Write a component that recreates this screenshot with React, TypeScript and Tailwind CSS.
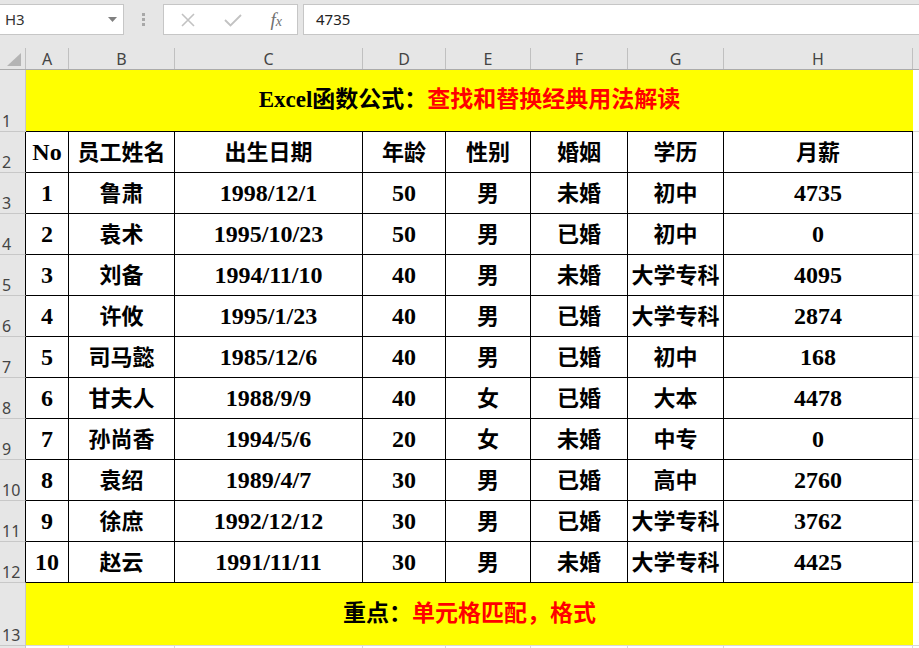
import React from "react";

const cols = [43, 106, 188, 83, 85, 97, 96, 189];
const letters = ["A", "B", "C", "D", "E", "F", "G", "H"];

const header = ["No", "员工姓名", "出生日期", "年龄", "性别", "婚姻", "学历", "月薪"];

const rows: string[][] = [
  ["1", "鲁肃", "1998/12/1", "50", "男", "未婚", "初中", "4735"],
  ["2", "袁术", "1995/10/23", "50", "男", "已婚", "初中", "0"],
  ["3", "刘备", "1994/11/10", "40", "男", "未婚", "大学专科", "4095"],
  ["4", "许攸", "1995/1/23", "40", "男", "已婚", "大学专科", "2874"],
  ["5", "司马懿", "1985/12/6", "40", "男", "已婚", "初中", "168"],
  ["6", "甘夫人", "1988/9/9", "40", "女", "已婚", "大本", "4478"],
  ["7", "孙尚香", "1994/5/6", "20", "女", "未婚", "中专", "0"],
  ["8", "袁绍", "1989/4/7", "30", "男", "已婚", "高中", "2760"],
  ["9", "徐庶", "1992/12/12", "30", "男", "已婚", "大学专科", "3762"],
  ["10", "赵云", "1991/11/11", "30", "男", "未婚", "大学专科", "4425"],
];

const uiFont = { fontFamily: '"Noto Sans", "Liberation Sans", sans-serif' };
const cellFont = { fontFamily: '"Liberation Serif", "Noto Sans CJK SC", serif' };

function RowNum({ n, h, dark }: { n?: string; h: string; dark?: boolean }) {
  return (
    <div
      className={`${h} w-[26px] shrink-0 bg-[#e6e6e6] border-b border-[#c8c8c8] border-r ${dark ? "border-r-black" : "border-r-[#c8c8c8]"} flex items-end pl-[2px] text-[16px] leading-none pb-[2px] text-[#444]`}
      style={uiFont}
    >
      {n}
    </div>
  );
}

function Banner({ n, h, black, red }: { n: string; h: string; black: string; red: string }) {
  return (
    <div className="flex">
      <RowNum n={n} h={h} />
      <div
        className={`${h} w-[887px] shrink-0 bg-[#ffff00] border-b border-black flex items-center justify-center text-[23px] font-bold`}
        style={cellFont}
      >
        <span className="text-black">{black}</span>
        <span className="text-[#ff0000]">{red}</span>
      </div>
      <div className={`${h} flex-1 bg-white border-b border-[#d8d8d8]`} />
    </div>
  );
}

function DataRow({ n, cells }: { n: string; cells: string[] }) {
  return (
    <div className="flex">
      <RowNum n={n} h="h-[41px]" dark />
      {cells.map((c, i) => (
        <div
          key={i}
          className="h-[41px] shrink-0 bg-white border-r border-b border-black flex items-center justify-center text-[22px] font-bold text-black whitespace-nowrap overflow-visible"
          style={{ ...cellFont, width: cols[i] }}
        >
          <span className={/^[0-9A-Za-z/]+$/.test(c) ? "text-[24px]" : ""}>{c}</span>
        </div>
      ))}
      <div className="h-[41px] flex-1 bg-white border-b border-[#d8d8d8]" />
    </div>
  );
}

export default function App() {
  return (
    <div className="w-[919px] h-[648px] overflow-hidden bg-[#e6e6e6] select-none">
      {/* formula bar */}
      <div className="h-[37px] flex items-start pt-[4px]" style={uiFont}>
        <div className="w-[124px] h-[31px] bg-white border border-[#c6c6c6] border-l-0 flex items-center justify-between pl-[5px] pr-[6px]">
          <span className="text-[15px] text-[#333]">H3</span>
          <svg width="9" height="5" viewBox="0 0 9 5">
            <path d="M0 0 L9 0 L4.5 5 Z" fill="#808080" />
          </svg>
        </div>
        <div className="w-[39px] h-[31px] flex flex-col items-center justify-center gap-[2px]">
          <span className="w-[3px] h-[3px] bg-[#a8a8a8]" />
          <span className="w-[3px] h-[3px] bg-[#a8a8a8]" />
          <span className="w-[3px] h-[3px] bg-[#a8a8a8]" />
        </div>
        <div className="w-[135px] h-[31px] bg-white border border-[#c6c6c6] flex items-center">
          <div className="w-[46px] flex justify-center pl-[2px]">
            <svg width="16" height="16" viewBox="0 0 16 16">
              <path d="M2 2 L14 14 M14 2 L2 14" stroke="#c2c2c2" strokeWidth="1.6" />
            </svg>
          </div>
          <div className="w-[46px] flex justify-center">
            <svg width="18" height="14" viewBox="0 0 18 14">
              <path d="M1 7 L6.5 12.5 L17 2" stroke="#c2c2c2" strokeWidth="1.8" fill="none" />
            </svg>
          </div>
          <div className="w-[42px] flex justify-center">
            <span className="italic text-[#707070] text-[19px] leading-none" style={{ fontFamily: '"Liberation Serif", serif' }}>
              f<span className="text-[14px]">x</span>
            </span>
          </div>
        </div>
        <div className="ml-[5px] flex-1 h-[31px] bg-white border border-[#c6c6c6] border-r-0 flex items-center pl-[12px]">
          <span className="text-[15px] text-[#222]">4735</span>
        </div>
      </div>
      <div className="h-[11px]" />
      {/* column headers */}
      <div className="flex h-[22px] border-b border-[#ababab]" style={uiFont}>
        <div className="w-[26px] shrink-0 border-r border-[#c0c0c0] flex items-end justify-end pr-[4px] pb-[3px]">
          <svg width="14" height="13" viewBox="0 0 14 13">
            <path d="M14 0 L14 13 L0 13 Z" fill="#b4b4b4" />
          </svg>
        </div>
        {letters.map((l, i) => (
          <div
            key={l}
            className="shrink-0 border-r border-[#c0c0c0] flex items-center justify-center text-[16px] text-[#444] leading-none"
            style={{ width: cols[i] }}
          >
            {l}
          </div>
        ))}
        <div className="flex-1" />
      </div>
      <Banner n="1" h="h-[62px]" black="Excel函数公式：" red="查找和替换经典用法解读" />
      <DataRow n="2" cells={header} />
      {rows.map((r, i) => (
        <DataRow key={i} n={String(i + 3)} cells={r} />
      ))}
      <div className="flex">
        <RowNum n="13" h="h-[63px]" />
        <div
          className="h-[63px] w-[887px] shrink-0 bg-[#ffff00] border-b border-[#d8d8d8] flex items-center justify-center text-[23px] font-bold"
          style={cellFont}
        >
          <span className="text-black">重点：</span>
          <span className="text-[#ff0000]">单元格匹配，格式</span>
        </div>
        <div className="h-[63px] flex-1 bg-white border-b border-[#d8d8d8]" />
      </div>
      <div className="flex h-[30px]">
        <RowNum h="h-[30px]" />
        {cols.map((w, i) => (
          <div key={i} className="h-[30px] shrink-0 bg-white border-r border-[#d8d8d8]" style={{ width: w }} />
        ))}
        <div className="flex-1 bg-white" />
      </div>
    </div>
  );
}
